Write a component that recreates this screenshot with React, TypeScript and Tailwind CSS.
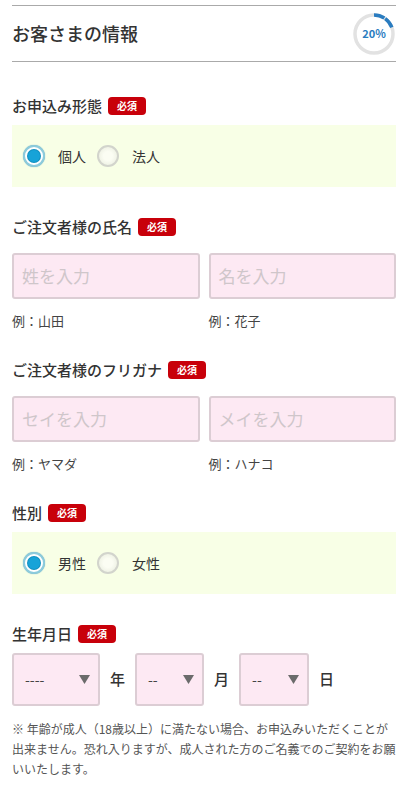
const font = { fontFamily: '"Noto Sans CJK JP", "Noto Sans", sans-serif' };

function Badge() {
  return (
    <span className="inline-flex items-center justify-center w-[38px] h-[18px] rounded-[4px] bg-[#c8000a] text-white text-[10px] font-bold leading-none">
      必須
    </span>
  );
}

function Label({ text, className = "" }: { text: string; className?: string }) {
  return (
    <div className={`flex items-center gap-[6px] h-5 ${className}`}>
      <span className="text-[15px] font-medium text-[#333] leading-5">{text}</span>
      <Badge />
    </div>
  );
}

function Radio({ checked }: { checked?: boolean }) {
  if (checked) {
    return (
      <span className="flex items-center justify-center w-[22px] h-[22px] rounded-full border-2 border-[#8ccbdc] bg-white shadow-[0_0_1px_#6aaabb]">
        <span className="w-[12px] h-[12px] rounded-full bg-[#17a3d8] shadow-[0_0_0_1px_#1190c0]" />
      </span>
    );
  }
  return (
    <span className="w-[22px] h-[22px] rounded-full border-2 border-[#d2d4cc] bg-[radial-gradient(circle,#fbfdf3_35%,#e6eadb)]" />
  );
}

function RadioBox({ options }: { options: string[] }) {
  return (
    <div className="flex items-center h-[62px] bg-[#f8ffe6] pl-[11px]">
      {options.map((o, i) => (
        <div key={o} className={`flex items-center ${i > 0 ? "ml-[11px]" : ""}`}>
          <Radio checked={i === 0} />
          <span className="ml-[13px] text-[14px] text-[#333]">{o}</span>
        </div>
      ))}
    </div>
  );
}

function TextPair({ ph, ex }: { ph: [string, string]; ex: [string, string] }) {
  return (
    <>
      <div className="grid grid-cols-2 gap-[9px] mt-4">
        {ph.map((p) => (
          <div
            key={p}
            className="h-[46px] rounded-[3px] border-2 border-[#dccdd4] bg-[#fde9f3] flex items-center px-[8px] text-[17px] text-[#cfc6ca]"
          >
            {p}
          </div>
        ))}
      </div>
      <div className="grid grid-cols-2 gap-[9px] mt-3 text-[13px] leading-5 text-[#444]">
        {ex.map((e) => (
          <span key={e}>{e}</span>
        ))}
      </div>
    </>
  );
}

function Select({ w, value }: { w: string; value: string }) {
  return (
    <div className={`${w} h-[53px] rounded-[3px] border-2 border-[#dccdd4] bg-[#fde9f3] flex items-center justify-between pl-[11px] pr-[8px]`}>
      <span className="text-[14px] font-normal text-[#444]">{value}</span>
      <svg width="11" height="9" viewBox="0 0 11 9">
        <path d="M0 0H11L5.5 9Z" fill="#6b6b6b" />
      </svg>
    </div>
  );
}

function Progress() {
  const r = 19;
  const c = 2 * Math.PI * r;
  const seg = c * 0.1;
  return (
    <div className="relative w-[44px] h-[44px]">
      <svg width="44" height="44" viewBox="0 0 44 44" className="-rotate-90">
        <circle cx="22" cy="22" r={r} fill="none" stroke="#e2e2e2" strokeWidth="3.5" />
        {[0, 1].map((i) => (
          <circle
            key={i}
            cx="22"
            cy="22"
            r={r}
            fill="none"
            stroke="#2a7cc0"
            strokeWidth="3.5"
            strokeDasharray={`${seg - 1} ${c}`}
            strokeDashoffset={-seg * i}
          />
        ))}
      </svg>
      <span className="absolute inset-0 flex items-center justify-center text-[11px] font-bold text-[#2a7cc0]">
        20%
      </span>
    </div>
  );
}

export default function App() {
  return (
    <div className="bg-white min-h-[789px] px-3" style={font}>
      {/* Header */}
      <div className="mt-[5px] h-[57px] border-y border-[#aaaaaa] flex items-center justify-between">
        <h1 className="text-[18px] font-medium text-[#333]">お客さまの情報</h1>
        <Progress />
      </div>

      {/* お申込み形態 */}
      <Label text="お申込み形態" className="mt-[34px]" />
      <div className="mt-[9px]">
        <RadioBox options={["個人", "法人"]} />
      </div>

      {/* 氏名 */}
      <Label text="ご注文者様の氏名" className="mt-[30px]" />
      <TextPair ph={["姓を入力", "名を入力"]} ex={["例：山田", "例：花子"]} />

      {/* フリガナ */}
      <Label text="ご注文者様のフリガナ" className="mt-[29px]" />
      <TextPair ph={["セイを入力", "メイを入力"]} ex={["例：ヤマダ", "例：ハナコ"]} />

      {/* 性別 */}
      <Label text="性別" className="mt-[29px]" />
      <div className="mt-[9px]">
        <RadioBox options={["男性", "女性"]} />
      </div>

      {/* 生年月日 */}
      <Label text="生年月日" className="mt-[30px]" />
      <div className="mt-[9px] flex items-center gap-[10px] text-[15px] font-medium text-[#333]">
        <Select w="w-[88px]" value="----" />
        <span>年</span>
        <Select w="w-[69px]" value="--" />
        <span>月</span>
        <Select w="w-[70px]" value="--" />
        <span>日</span>
      </div>

      <p className="mt-[13px] text-[12px] leading-5 text-[#555]">
        ※ 年齢が成人（18歳以上）に満たない場合、お申込みいただくことが出来ません。恐れ入りますが、成人された方のご名義でのご契約をお願いいたします。
      </p>
    </div>
  );
}
